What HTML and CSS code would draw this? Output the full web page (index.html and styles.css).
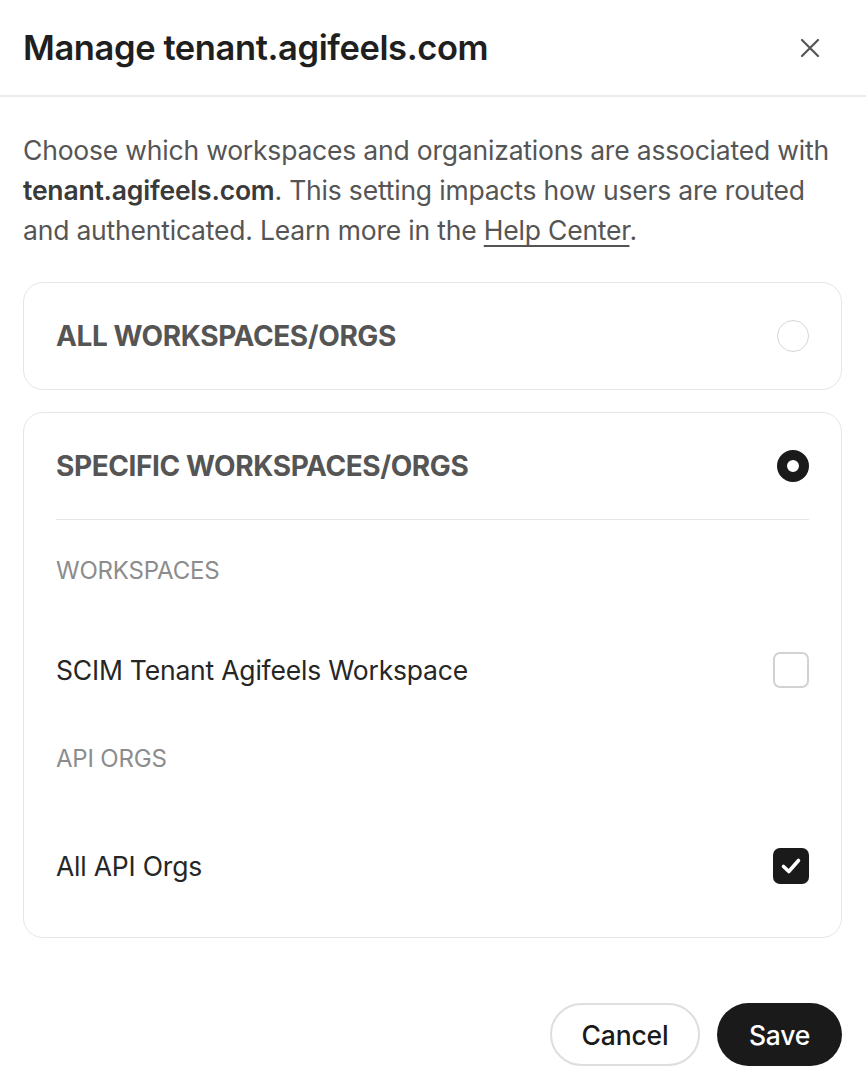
FILE: index.html
```html
<!DOCTYPE html>
<html lang="en">
<head>
<meta charset="utf-8">
<title>Manage tenant.agifeels.com</title>
<link rel="stylesheet" href="styles.css">
</head>
<body>
<div class="dialog">
  <header class="dialog-header">
    <h1 class="dialog-title">Manage tenant.agifeels.com</h1>
    <button class="close-btn" aria-label="Close">
      <svg width="20" height="20" viewBox="0 0 20 20" fill="none" stroke="#555555" stroke-width="2.2" stroke-linecap="round">
        <path d="M2 2 L18 18 M18 2 L2 18"/>
      </svg>
    </button>
  </header>

  <main class="dialog-body">
    <p class="intro">Choose which workspaces and organizations are associated with <strong>tenant.agifeels.com</strong>. This setting impacts how users are routed and authenticated. Learn more in the <a class="link" href="#">Help Center</a>.</p>

    <section class="card">
      <div class="card-head">
        <span class="card-title">ALL WORKSPACES/ORGS</span>
        <span class="radio"></span>
      </div>
    </section>

    <section class="card card-open">
      <div class="card-head">
        <span class="card-title">SPECIFIC WORKSPACES/ORGS</span>
        <span class="radio radio-on"></span>
      </div>
      <div class="card-sub">
        <div class="group group-first">
          <div class="group-label">WORKSPACES</div>
          <div class="option-row">
            <span class="option-name">SCIM Tenant Agifeels Workspace</span>
            <span class="checkbox"></span>
          </div>
        </div>
        <div class="group group-second">
          <div class="group-label">API ORGS</div>
          <div class="option-row">
            <span class="option-name">All API Orgs</span>
            <span class="checkbox checkbox-on">
              <svg width="36" height="36" viewBox="0 0 36 36" fill="none" stroke="#ffffff" stroke-width="3.6" stroke-linecap="round" stroke-linejoin="round">
                <path d="M10.5 18.5 L15.8 23.5 L25.5 12.5"/>
              </svg>
            </span>
          </div>
        </div>
      </div>
    </section>
  </main>

  <footer class="dialog-footer">
    <button class="btn btn-secondary">Cancel</button>
    <button class="btn btn-primary">Save</button>
  </footer>
</div>
</body>
</html>
```

FILE: styles.css
```css
* {
  box-sizing: border-box;
}

html, body {
  margin: 0;
  padding: 0;
  background: #ffffff;
}

body {
  font-family: Inter, "Noto Sans", "Liberation Sans", sans-serif;
  color: #1f1f1f;
}

.dialog {
  width: 866px;
  min-height: 1084px;
}

.dialog-header {
  height: 97px;
  border-bottom: 2px solid #ebebeb;
  display: flex;
  align-items: center;
  justify-content: space-between;
  padding: 0 46px 0 23px;
}

.dialog-title {
  margin: 0;
  font-size: 34.5px;
  font-weight: 600;
  letter-spacing: -0.4px;
  color: #1f1f1f;
  line-height: 42px;
}

.close-btn {
  border: 0;
  background: none;
  padding: 0;
  width: 20px;
  height: 20px;
  display: flex;
  cursor: pointer;
}

.dialog-body {
  padding: 0 24px 0 23px;
}

.intro {
  margin: 33px 0 32px;
  font-size: 26.5px;
  line-height: 40px;
  color: #555555;
  letter-spacing: -0.2px;
}

.intro strong {
  font-weight: 600;
  color: #3a3a3a;
}

.link {
  color: #555555;
  text-decoration: underline;
  text-decoration-thickness: 1.5px;
  text-underline-offset: 5px;
}

.card {
  border: 1.5px solid #e6e6e6;
  border-radius: 20px;
  padding: 0 32px;
}

.card + .card {
  margin-top: 22px;
}

.card-head {
  height: 106px;
  display: flex;
  align-items: center;
  justify-content: space-between;
}

.card-title {
  font-size: 28px;
  font-weight: 700;
  color: #555555;
  letter-spacing: -0.4px;
}

.radio {
  width: 32px;
  height: 32px;
  border-radius: 50%;
  border: 1.5px solid #d6d6d6;
  background: #ffffff;
}

.radio-on {
  border: 10.5px solid #1a1a1a;
  background: #ffffff;
}

.card-sub {
  border-top: 1.5px solid #e6e6e6;
  padding: 35px 0 53px;
}

.group-label {
  font-size: 24px;
  line-height: 32px;
  color: #8c8c8c;
  letter-spacing: -0.2px;
}

.group-second {
  margin-top: 55px;
}

.option-row {
  display: flex;
  align-items: center;
  justify-content: space-between;
  height: 36px;
}

.group-first .option-row {
  margin-top: 65px;
}

.group-second .option-row {
  margin-top: 73px;
}

.option-name {
  font-size: 26.5px;
  color: #262626;
  letter-spacing: -0.2px;
}

.checkbox {
  width: 36px;
  height: 36px;
  border-radius: 7px;
  border: 2px solid #d2d2d2;
  display: flex;
}

.checkbox-on {
  border: 0;
  background: #1a1a1a;
}

.dialog-footer {
  display: flex;
  justify-content: flex-end;
  gap: 17px;
  padding: 65px 24px 0 0;
}

.btn {
  height: 63px;
  border-radius: 32px;
  font-family: Inter, "Noto Sans", "Liberation Sans", sans-serif;
  font-size: 26.5px;
  font-weight: 500;
  letter-spacing: -0.2px;
  cursor: pointer;
}

.btn-secondary {
  width: 150px;
  background: #ffffff;
  border: 2px solid #dedede;
  color: #1a1a1a;
}

.btn-primary {
  width: 125px;
  background: #1a1a1a;
  border: 0;
  color: #ffffff;
}
```
